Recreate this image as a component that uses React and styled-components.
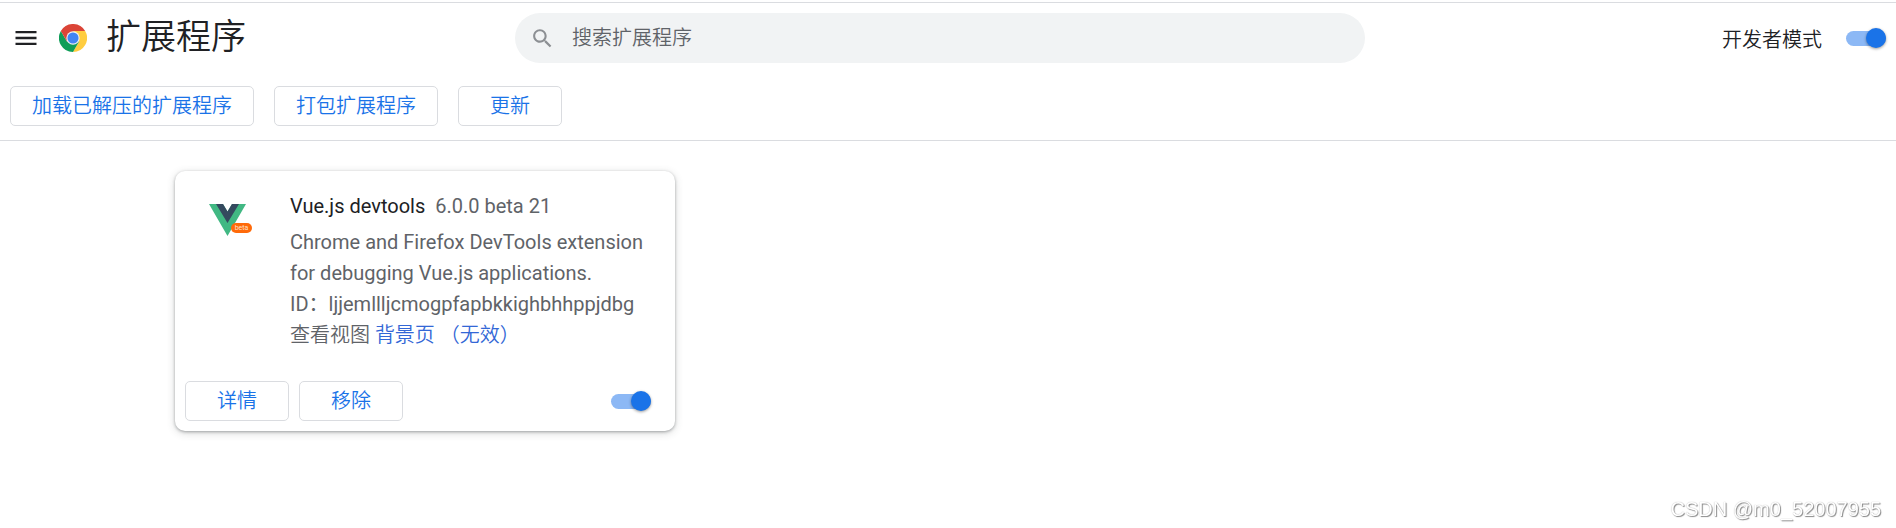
import { useState } from "react";
import styled, { createGlobalStyle } from "styled-components";

export default function App() {
    const [devMode, setDevMode] = useState(true);
    const [enabled, setEnabled] = useState(true);
    const [search, setSearch] = useState("");

    return (
        <Page>
            <GlobalStyle />
            <Header>
                <Brand>
                    <MenuButton type="button" aria-label="主菜单">
                        <svg width="28" height="28" viewBox="0 0 24 24" fill="#202124">
                            <path d="M3 18h18v-2H3v2zm0-5h18v-2H3v2zm0-7v2h18V6H3z" />
                        </svg>
                    </MenuButton>
                    <ChromeLogo />
                    <h1>扩展程序</h1>
                </Brand>
                <SearchBox>
                    <svg width="25" height="25" viewBox="0 0 24 24" fill="#8c8f93">
                        <path d="M15.5 14h-.79l-.28-.27C15.41 12.59 16 11.11 16 9.5 16 5.91 13.09 3 9.5 3S3 5.91 3 9.5 5.91 16 9.5 16c1.61 0 3.09-.59 4.23-1.57l.27.28v.79l5 4.99L20.49 19l-4.99-5zm-6 0C7.01 14 5 11.99 5 9.5S7.01 5 9.5 5 14 7.01 14 9.5 11.99 14 9.5 14z" />
                    </svg>
                    <input
                        type="search"
                        aria-label="搜索扩展程序"
                        placeholder="搜索扩展程序"
                        value={search}
                        onChange={(e) => setSearch(e.target.value)}
                    />
                </SearchBox>
                <DevMode>
                    <label htmlFor="devMode">开发者模式</label>
                    <Toggle id="devMode" type="checkbox" role="switch" checked={devMode} onChange={() => setDevMode(!devMode)} />
                </DevMode>
            </Header>
            <DevToolbar>
                <Button type="button">加载已解压的扩展程序</Button>
                <Button type="button">打包扩展程序</Button>
                <Button type="button">更新</Button>
            </DevToolbar>
            <Content>
                <Card>
                    <CardMain>
                        <VueLogo />
                        <Details>
                            <CardTitle>
                                <h2>Vue.js devtools</h2>
                                <span>6.0.0 beta 21</span>
                            </CardTitle>
                            <p>Chrome and Firefox DevTools extension for debugging Vue.js applications.</p>
                            <p>ID：ljjemllljcmogpfapbkkighbhhppjdbg</p>
                            <Views>查看视图 <a href="#background">背景页 （无效）</a></Views>
                        </Details>
                    </CardMain>
                    <CardActions>
                        <Button type="button">详情</Button>
                        <Button type="button">移除</Button>
                        <Toggle type="checkbox" role="switch" aria-label="启用 Vue.js devtools" checked={enabled} onChange={() => setEnabled(!enabled)} />
                    </CardActions>
                </Card>
            </Content>
            <Watermark>CSDN @m0_52007955</Watermark>
        </Page>
    );
}

function ChromeLogo() {
    return (
        <svg width="28" height="28" viewBox="0 0 48 48" aria-hidden="true">
            <path d="M24 24 3.2 12A24 24 0 0 1 44.8 12z" fill="#db4437" />
            <path d="M24 12h20.8A24 24 0 0 1 24 48l10.4-18z" fill="#ffcd40" />
            <path d="M3.2 12A24 24 0 0 0 24 48l10.4-18L24 24l-10.4 6z" fill="#0f9d58" />
            <path d="M3.2 12 13.6 30 24 24V12z" fill="#db4437" />
            <circle cx="24" cy="24" r="11.5" fill="#f1f1f1" />
            <circle cx="24" cy="24" r="9.5" fill="#4285f4" />
        </svg>
    );
}

function VueLogo() {
    return (
        <svg width="45" height="45" viewBox="0 0 45 45" aria-hidden="true">
            <path d="M1 6h14l4.500 7.500L24 6h14L19.500 38z" fill="#41b883" />
            <path d="M8 6h7l4.500 7.500L24 6h7L19.500 25z" fill="#34495e" />
            <rect x="23" y="25" width="21" height="10" rx="5" fill="#ff6a0a" />
            <text x="33.5" y="32" textAnchor="middle" fontFamily="Roboto, sans-serif" fontSize="7" fill="#ffe0c8">beta</text>
        </svg>
    );
}

const GlobalStyle = createGlobalStyle`
    * {
        box-sizing: border-box;
    }
    body {
        margin: 0;
        background: #fff;
        color: #202124;
        font-family: Roboto, "Noto Sans CJK SC", sans-serif;
        font-size: 20px;
        font-weight: 400;
    }
    h1, h2, p {
        margin: 0;
        font-weight: 400;
    }
    button, input {
        font: inherit;
    }
    h1, label, button, input {
        font-weight: 350;
    }
`

const Page = styled.div`
    display: flex;
    flex-direction: column;
    min-height: 100vh;
    padding-top: 2px;
`

const Header = styled.header`
    display: grid;
    grid-template-columns: 1fr minmax(200px, 850px) 1fr;
    align-items: center;
    height: 71px;
    border-top: 1px solid #dadce0;
`

const Brand = styled.div`
    display: flex;
    align-items: center;
    padding-left: 12px;

    h1 {
        margin-left: 19px;
        font-size: 35px;
        line-height: 48px;
        white-space: nowrap;
    }
`

const MenuButton = styled.button`
    display: flex;
    margin-right: 19px;
    padding: 0;
    border: 0;
    background: none;
    cursor: pointer;
`

const SearchBox = styled.div`
    display: flex;
    align-items: center;
    gap: 17px;
    height: 50px;
    margin-left: -8px;
    margin-right: 8px;
    padding: 0 20px 0 15px;
    border-radius: 25px;
    background: #f1f3f4;

    input {
        flex: 1;
        min-width: 0;
        padding: 0;
        border: 0;
        outline: none;
        background: none;
        color: #202124;
    }
    input::placeholder {
        color: #5f6368;
        opacity: 1;
    }
`

const DevMode = styled.div`
    display: flex;
    align-items: center;
    justify-content: flex-end;
    gap: 24px;
    padding-right: 10px;
`

/* thin bar as the background, the knob is taller and overflows it */
const Toggle = styled.input`
    appearance: none;
    display: flex;
    align-items: center;
    justify-content: ${({ checked }) => (checked ? "flex-end" : "flex-start")};
    width: 40px;
    height: 15px;
    margin: 0;
    border-radius: 8px;
    background: ${({ checked }) => (checked ? "#8cb8f5" : "#bdc1c6")};
    cursor: pointer;

    &::before {
        content: "";
        width: 20px;
        height: 20px;
        flex-shrink: 0;
        border-radius: 50%;
        background: ${({ checked }) => (checked ? "#1a73e8" : "#fff")};
        box-shadow: 0 1px 3px rgba(0, 0, 0, 0.4);
    }
`

const Button = styled.button`
    min-width: 104px;
    height: 40px;
    padding: 0 21px;
    border: 1px solid #dadce0;
    border-radius: 5px;
    background: #fff;
    color: #1a73e8;
    line-height: 30px;
    white-space: nowrap;
    cursor: pointer;
`

const DevToolbar = styled.div`
    display: flex;
    gap: 20px;
    padding: 13px 10px 14px;
    border-bottom: 1px solid #dadce0;
`

const Content = styled.main`
    display: grid;
    grid-template-columns: repeat(auto-fill, 500px);
    gap: 15px;
    width: 100%;
    max-width: 1546px;
    margin: 0 auto;
    padding: 30px 0 60px;
`

const Card = styled.article`
    display: flex;
    flex-direction: column;
    min-height: 260px;
    border-radius: 10px;
    background: #fff;
    box-shadow: 0 1px 3px rgba(60, 64, 67, 0.4), 0 2px 8px rgba(60, 64, 67, 0.2);
`

const CardMain = styled.div`
    display: flex;
    flex: 1;
    gap: 37px;
    padding: 20px 20px 0 33px;

    > svg {
        flex-shrink: 0;
        margin-top: 7px;
    }
`

const Details = styled.div`
    color: #5f6368;

    p {
        line-height: 31px;
    }
`

const Views = styled.p`
    && {
        font-weight: 350;
    }
    a {
        color: #3367d6;
        text-decoration: none;
    }
`

const CardTitle = styled.div`
    display: flex;
    gap: 10px;
    margin-bottom: 5px;
    line-height: 31px;

    h2 {
        color: #202124;
        font-size: 20px;
    }
`

const CardActions = styled.div`
    display: flex;
    align-items: center;
    gap: 10px;
    padding: 10px;

    input {
        margin-left: auto;
        margin-right: 14px;
    }
`

const Watermark = styled.div`
    position: fixed;
    right: 15px;
    bottom: 7px;
    color: #fff;
    font-family: "Liberation Sans", Arial, sans-serif;
    font-size: 20px;
    line-height: 24px;
    text-shadow: 1px 1px 1px #888, 0 0 1px #aaa;
`
